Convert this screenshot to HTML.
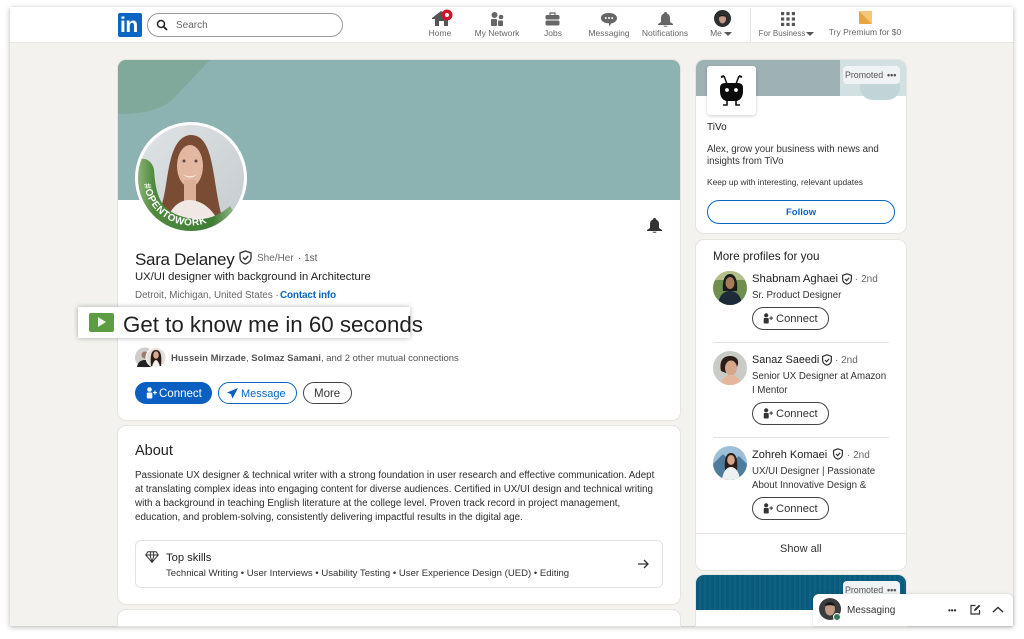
<!DOCTYPE html>
<html><head><meta charset="utf-8"><style>
html,body{margin:0;padding:0;width:1024px;height:639px;overflow:hidden;background:#fff}
*{box-sizing:border-box}
body{font-family:"Liberation Sans",sans-serif;color:#1f1f1f;position:relative}
.t{position:absolute;white-space:nowrap;line-height:1}
.a{position:absolute}
.card{position:absolute;background:#fff;border-radius:8px;box-shadow:0 0 0 1px #e6e4df}
.nl{font-size:8.5px;color:#666;transform:translateX(-50%)}
.g{color:#666}
</style></head><body>
<div class="a" style="left:10px;top:7px;width:1003px;height:619px;background:#f3f2ef;box-shadow:0 1px 5px rgba(0,0,0,.3);overflow:hidden"></div>
<div class="a" style="left:10px;top:7px;width:1003px;height:36px;background:#fff;border-bottom:1px solid #e8e6e1"></div>

<!-- nav -->
<div class="a" style="left:118px;top:13px;width:24px;height:24px;background:#0a66c2;border-radius:2px"></div>
<div class="t" style="left:120px;top:15px;font-size:21px;font-weight:bold;color:#fff;letter-spacing:-.5px">in</div>
<div class="a" style="left:147px;top:13px;width:196px;height:24px;border:1px solid #999;border-radius:12px;background:#fff"></div>
<svg class="a" style="left:156px;top:19px" width="12" height="12" viewBox="0 0 12 12"><circle cx="5" cy="5" r="3.500" fill="none" stroke="#222" stroke-width="1.500"/><path d="M7.500 7.500L11 11" stroke="#222" stroke-width="1.800"/></svg>
<div class="t g" style="left:176px;top:20.500px;font-size:10px">Search</div>

<svg class="a" style="left:431px;top:9px" width="24" height="18" viewBox="0 0 24 18"><path d="M1 9L10 2l3 2V3h3v3l3 3v1h-2v7h-4v-5H8v5H4v-7H1z" fill="#555"/><circle cx="16" cy="6" r="5.500" fill="#c9182b"/><circle cx="16" cy="6" r="2" fill="#fff"/></svg>
<div class="t nl" style="left:440px;top:29px">Home</div>
<svg class="a" style="left:490px;top:12px" width="14" height="15" viewBox="0 0 14 15"><circle cx="4.500" cy="3" r="3" fill="#666"/><circle cx="11" cy="5" r="2.300" fill="#666"/><rect x="1" y="7" width="6" height="7" rx="1" fill="#666"/><rect x="8" y="8.500" width="5" height="5.500" rx="1" fill="#666"/></svg>
<div class="t nl" style="left:497px;top:29px">My Network</div>
<svg class="a" style="left:545px;top:12px" width="15" height="14" viewBox="0 0 15 14"><path d="M5 3V1h5v2" fill="none" stroke="#666" stroke-width="1.200"/><rect x="0.500" y="3" width="14" height="4.500" rx="1.500" fill="#666"/><rect x="0.500" y="8.500" width="14" height="5" rx="1.500" fill="#666"/></svg>
<div class="t nl" style="left:553px;top:29px">Jobs</div>
<svg class="a" style="left:601px;top:13px" width="16" height="14" viewBox="0 0 16 14"><path d="M8 0c4.500 0 8 2 8 5s-2.500 5-5.500 5.300L8 13.500V10.300C3.500 10.300 0 8.500 0 5s3.500-5 8-5z" fill="#666"/><circle cx="4.800" cy="5" r="1" fill="#fff"/><circle cx="8" cy="5" r="1" fill="#fff"/><circle cx="11.200" cy="5" r="1" fill="#fff"/></svg>
<div class="t nl" style="left:609px;top:29px">Messaging</div>
<svg class="a" style="left:658px;top:12px" width="15" height="15" viewBox="0 0 15 15"><path d="M7.500 0a1.500 1.500 0 0 1 1.500 1.500C11 2.300 12 4 12 6v4l3 2v1H0v-1l3-2V6c0-2 1-3.700 3-4.500A1.500 1.500 0 0 1 7.500 0z" fill="#666"/><path d="M5.500 13.800h4a2 1 0 0 1-4 0z" fill="#666"/></svg>
<div class="t nl" style="left:665px;top:29px">Notifications</div>
<svg class="a" style="left:714px;top:10px" width="17" height="17" viewBox="0 0 17 17"><circle cx="8.500" cy="8.500" r="8.500" fill="#2c2e30"/><ellipse cx="8.500" cy="9" rx="3.500" ry="4.500" fill="#c49a84"/><path d="M5 7c0-3 7-3 7 0-2-1-5-1-7 0z" fill="#191919"/></svg>
<div class="t nl" style="left:716px;top:29px">Me</div>
<div class="a" style="left:724px;top:32px;border:4px solid transparent;border-top:4px solid #555;border-bottom:0"></div>
<div class="a" style="left:750px;top:8px;width:1px;height:35px;background:#e8e6e1"></div>
<svg class="a" style="left:781px;top:12px" width="14" height="14" viewBox="0 0 14 14" fill="#555"><rect width="3.200" height="3.200"/><rect x="5.400" width="3.200" height="3.200"/><rect x="10.800" width="3.200" height="3.200"/><rect y="5.400" width="3.200" height="3.200"/><rect x="5.400" y="5.400" width="3.200" height="3.200"/><rect x="10.800" y="5.400" width="3.200" height="3.200"/><rect y="10.800" width="3.200" height="3.200"/><rect x="5.400" y="10.800" width="3.200" height="3.200"/><rect x="10.800" y="10.800" width="3.200" height="3.200"/></svg>
<div class="t nl" style="left:782px;top:29.500px;font-size:8px">For Business</div>
<div class="a" style="left:806px;top:32px;border:4px solid transparent;border-top:4px solid #555;border-bottom:0"></div>
<svg class="a" style="left:859px;top:11px" width="13" height="13" viewBox="0 0 13 13"><rect width="13" height="13" rx="1" fill="#e9a53f"/><path d="M0 0h13v13z" fill="#f4c677"/></svg>
<div class="t nl" style="left:865px;top:28px">Try Premium for $0</div>

<!-- main card -->
<div class="card" style="left:118px;top:60px;width:562px;height:360px;overflow:hidden">
<div class="a" style="left:0;top:0;width:562px;height:140px;background:#8cb3b2"></div>
<svg class="a" style="left:0;top:0" width="100" height="56" viewBox="0 0 100 56"><path d="M0 0H92L56 38C46 48 30 54 0 54z" fill="#80a89b"/></svg>
</div>

<svg class="a" style="left:135px;top:122px" width="112" height="112" viewBox="0 0 112 112">
<defs><clipPath id="c"><circle cx="56" cy="56" r="53"/></clipPath>
<linearGradient id="bg" x1="0" y1="0" x2="1" y2="1"><stop offset="0" stop-color="#e0e4e6"/><stop offset="1" stop-color="#c4cace"/></linearGradient>
<linearGradient id="gr" x1="0" y1="0" x2="1" y2="0"><stop offset="0" stop-color="#9fc088"/><stop offset=".18" stop-color="#4f8a3e"/><stop offset=".7" stop-color="#3f7d34"/><stop offset="1" stop-color="#c9d8bd"/></linearGradient></defs>
<circle cx="56" cy="56" r="56" fill="#fff"/>
<g clip-path="url(#c)"><rect width="112" height="112" fill="url(#bg)"/>
<path d="M27 82C34 60 32 16 55 13c24-1 22 42 31 78l-12 6H36z" fill="#7a4c33"/>
<ellipse cx="55" cy="44" rx="13" ry="21" fill="#e3b8a3"/>
<rect x="49" y="58" width="12" height="22" fill="#dcae98"/>
<circle cx="49" cy="39" r="1.500" fill="#5a4a44"/><circle cx="61" cy="39" r="1.500" fill="#5a4a44"/>
<path d="M48 52q7 5 14 0q-7 7-14 0z" fill="#fff"/>
<path d="M30 112C30 88 44 78 54 78s26 6 34 34z" fill="#f1e7e5"/>
<path d="M4 38C10 34 18 40 19 48 20 62 22 76 30 85 38 93 52 97 64 97 76 97 86 92 95 84L112 112H-2V38z" fill="url(#gr)"/>
</g>
<path id="arc" d="M9 62A47.500 47.500 0 0 0 80 97" fill="none"/>
<text font-family="Liberation Sans" font-weight="bold" font-size="10" fill="#fff" letter-spacing=".5"><textPath href="#arc">#OPENTOWORK</textPath></text>
</svg>

<svg class="a" style="left:647px;top:218px" width="15" height="15" viewBox="0 0 15 15"><path d="M7.500 0a1.500 1.500 0 0 1 1.500 1.500C11 2.300 12 4 12 6v4l3 2v1H0v-1l3-2V6c0-2 1-3.700 3-4.500A1.500 1.500 0 0 1 7.500 0z" fill="#333"/><path d="M5.500 13.800h4a2 1 0 0 1-4 0z" fill="#333"/></svg>

<div class="t" style="left:135px;top:251px;font-size:17px;letter-spacing:-.3px;color:#222">Sara Delaney</div>
<svg class="a" style="left:238px;top:250px" width="15" height="15" viewBox="0 0 15 15"><path d="M7.500 1L13 3v4.500C13 11 10.500 13 7.500 14 4.500 13 2 11 2 7.500V3z" fill="none" stroke="#333" stroke-width="1.300"/><path d="M5 7.500l2 2 3.200-3.500" fill="none" stroke="#333" stroke-width="1.300"/></svg>
<div class="t g" style="left:257px;top:253.500px;font-size:10px">She/Her</div>
<div class="t" style="left:298px;top:253.500px;font-size:10px;color:#555">· 1st</div>
<div class="t" style="left:135px;top:272px;font-size:11.250px;color:#222">UX/UI designer with background in Architecture</div>
<div class="t g" style="left:135px;top:291px;font-size:9.800px">Detroit, Michigan, United States ·</div>
<div class="t" style="left:280px;top:291px;font-size:10px;color:#0a66c2;font-weight:bold;letter-spacing:-.2px">Contact info</div>

<div class="a" style="left:78px;top:307px;width:332px;height:31px;background:#fff;box-shadow:0 0 5px rgba(0,0,0,.3)"></div>
<div class="a" style="left:89px;top:313px;width:25px;height:19px;background:#5d9c45;border-radius:2px"></div>
<div class="a" style="left:98px;top:317px;border-left:8px solid #f1f5ee;border-top:5.500px solid transparent;border-bottom:5.500px solid transparent"></div>
<div class="t" style="left:123px;top:314px;font-size:22.300px;color:#222">Get to know me in 60 seconds</div>

<svg class="a" style="left:135px;top:347px" width="32" height="21" viewBox="0 0 32 21"><circle cx="10" cy="10.500" r="10" fill="#cfcdca"/><path d="M2 20c1-6 5-7 8-7s7 1 8 7z" fill="#222"/><circle cx="10" cy="8" r="3.500" fill="#9c7c68"/><circle cx="21" cy="10.500" r="10" fill="#e6e0dc" stroke="#fff"/><path d="M16 19c-1-10 0-16 5-16s6 6 5 16z" fill="#2a1d18"/><ellipse cx="21" cy="8" rx="2.800" ry="3.800" fill="#d8a890"/><path d="M17 20c1-5 3-7 4-7s3 2 4 7z" fill="#f4f0ee"/></svg>
<div class="t" style="left:171px;top:353.500px;font-size:9.500px;color:#555"><b>Hussein Mirzade</b>, <b>Solmaz Samani</b>, and 2 other mutual connections</div>

<div class="a" style="left:135px;top:382px;width:77px;height:22px;border-radius:11px;background:#0a5fc0"></div>
<svg class="a" style="left:146px;top:387px" width="11" height="12" viewBox="0 0 11 12" fill="#fff"><circle cx="3.500" cy="2.500" r="2.300"/><rect x="0.800" y="5.500" width="5.500" height="6" rx="1"/><rect x="7" y="5" width="4" height="1.100"/><rect x="8.400" y="3.600" width="1.100" height="4"/></svg>
<div class="t" style="left:159px;top:388.500px;font-size:11.500px;color:#fff">Connect</div>
<div class="a" style="left:218px;top:382px;width:79px;height:22px;border-radius:11px;border:1px solid #0a66c2;background:#fff"></div>
<svg class="a" style="left:227px;top:388px" width="11" height="11" viewBox="0 0 11 11"><path d="M11 0L0 4.500 4 6.200 5.500 10.500z" fill="#0a5fc0"/></svg>
<div class="t" style="left:241px;top:388.500px;font-size:11px;color:#0a66c2">Message</div>
<div class="a" style="left:303px;top:382px;width:49px;height:22px;border-radius:11px;border:1px solid #444;background:#fff"></div>
<div class="t" style="left:314px;top:388.500px;font-size:11.500px;color:#333">More</div>

<!-- About -->
<div class="card" style="left:118px;top:426px;width:562px;height:178px"></div>
<div class="t" style="left:135px;top:444px;font-size:14.500px;color:#222">About</div>
<div class="t" style="left:135px;top:471px;font-size:9.800px;color:#2b2b2b">Passionate UX designer &amp; technical writer with a strong foundation in user research and effective communication. Adept</div>
<div class="t" style="left:135px;top:485px;font-size:9.800px;color:#2b2b2b">at translating complex ideas into engaging content for diverse audiences. Certified in UX/UI design and technical writing</div>
<div class="t" style="left:135px;top:499px;font-size:9.800px;color:#2b2b2b">with a background in teaching English literature at the college level. Proven track record in project management,</div>
<div class="t" style="left:135px;top:513px;font-size:9.800px;color:#2b2b2b">education, and problem-solving, consistently delivering impactful results in the digital age.</div>
<div class="a" style="left:135px;top:540px;width:528px;height:48px;border:1px solid #e4e2de;border-radius:6px;background:#fff"></div>
<svg class="a" style="left:145px;top:551px" width="14" height="12" viewBox="0 0 14 12"><path d="M3 .7h8l2.300 3.300L7 11.300.7 4zM.7 4h12.600M5 4l2 7.300L9 4M5 4l1-3.300M9 4L8 .7" fill="none" stroke="#333" stroke-width="1"/></svg>
<div class="t" style="left:166px;top:553px;font-size:11.200px;color:#222">Top skills</div>
<div class="t" style="left:166px;top:568.500px;font-size:9.570px;color:#333">Technical Writing • User Interviews • Usability Testing • User Experience Design (UED) • Editing</div>
<svg class="a" style="left:638px;top:559px" width="11" height="10" viewBox="0 0 11 10"><path d="M0 5h9.500M6 1l4 4-4 4" fill="none" stroke="#333" stroke-width="1.300"/></svg>

<div class="card" style="left:118px;top:610px;width:562px;height:16px;border-radius:8px 8px 0 0"></div>

<!-- Ad card -->
<div class="card" style="left:696px;top:60px;width:210px;height:173px;overflow:hidden">
<div class="a" style="left:0;top:0;width:144px;height:36px;background:#9eb1b3"></div>
<div class="a" style="left:144px;top:0;width:66px;height:36px;background:#d3e0e1"></div>
<div class="a" style="left:164px;top:14px;width:40px;height:26px;border-radius:14px;background:#c1d5d9"></div>
</div>
<div class="a" style="left:707px;top:66px;width:49px;height:49px;background:#fff;border-radius:3px;box-shadow:0 1px 3px rgba(0,0,0,.2)"></div>
<svg class="a" style="left:718px;top:73px" width="27" height="34" viewBox="0 0 27 34"><path d="M9 11L6 3M18 11L21 3" stroke="#111" stroke-width="1.500"/><path d="M6 3L3 4M21 3L24 4" stroke="#111" stroke-width="2"/><path d="M7 10h13q5 0 5 5v3q0 8-6 10H8q-6-2-6-10v-3q0-5 5-5z" fill="#0c0c0c"/><circle cx="9" cy="17" r="1.900" fill="#fff"/><circle cx="18" cy="17" r="1.900" fill="#fff"/><path d="M9 28v4H5M18 28v4h4" fill="none" stroke="#111" stroke-width="1.600"/></svg>
<div class="a" style="left:843px;top:66px;width:57px;height:18px;background:#f0f3f3;border-radius:4px"></div>
<div class="t" style="left:845px;top:70.500px;font-size:8.800px;color:#555">Promoted</div>
<div class="t" style="left:887px;top:71px;font-size:9px;color:#555;font-weight:bold">•••</div>
<div class="t" style="left:707px;top:123px;font-size:10px;color:#222">TiVo</div>
<div class="t" style="left:707px;top:145px;font-size:9.700px;color:#333">Alex, grow your business with news and</div>
<div class="t" style="left:707px;top:156.500px;font-size:9.700px;color:#333">insights from TiVo</div>
<div class="t" style="left:707px;top:178px;font-size:8.400px;color:#333">Keep up with interesting, relevant updates</div>
<div class="a" style="left:707px;top:200px;width:188px;height:24px;border-radius:12px;border:1px solid #0a66c2;background:#fff"></div>
<div class="t" style="left:786px;top:208px;font-size:9.500px;color:#0a66c2;font-weight:bold">Follow</div>

<!-- profiles -->
<div class="card" style="left:696px;top:240px;width:210px;height:330px"></div>
<div class="t" style="left:713px;top:251px;font-size:11.700px;color:#222">More profiles for you</div>

<svg class="a" style="left:713px;top:271px" width="34" height="34" viewBox="0 0 34 34"><defs><clipPath id="p"><circle cx="17" cy="17" r="17"/></clipPath></defs><g clip-path="url(#p)"><rect width="34" height="34" fill="#6e8f4e"/><path d="M0 0h34v9H0z" fill="#b4c08c"/><path d="M10 20c-1-11 2-17 7-17s8 6 7 17z" fill="#1a1a1a"/><ellipse cx="17" cy="12" rx="4.500" ry="6" fill="#a97a5a"/><path d="M5 34c1-10 6-14 12-14s11 4 12 14z" fill="#1d2a38"/></g></svg>
<div class="t" style="left:752px;top:274px;font-size:11.300px;color:#222">Shabnam Aghaei</div>
<svg class="a" style="left:841px;top:273px" width="12" height="12" viewBox="0 0 15 15"><path d="M7.500 1L13 3v4.500C13 11 10.500 13 7.500 14 4.500 13 2 11 2 7.500V3z" fill="none" stroke="#333" stroke-width="1.500"/><path d="M5 7.500l2 2 3.200-3.500" fill="none" stroke="#333" stroke-width="1.500"/></svg>
<div class="t g" style="left:855px;top:275px;font-size:10px">· 2nd</div>
<div class="t" style="left:752px;top:290.500px;font-size:9.700px;color:#333">Sr. Product Designer</div>
<div class="a" style="left:752px;top:307px;width:77px;height:23px;border-radius:12px;border:1px solid #444;background:#fff"></div>
<svg class="a" style="left:763px;top:313px" width="10" height="11" viewBox="0 0 11 12" fill="#333"><circle cx="3.500" cy="2.500" r="2.300"/><rect x="0.800" y="5.500" width="5.500" height="6" rx="1"/><rect x="7" y="5" width="4" height="1.100"/><rect x="8.400" y="3.600" width="1.100" height="4"/></svg>
<div class="t" style="left:776px;top:314px;font-size:11.200px;color:#333">Connect</div>
<div class="a" style="left:713px;top:342px;width:176px;height:1px;background:#e6e4e0"></div>

<svg class="a" style="left:713px;top:351px" width="34" height="34" viewBox="0 0 34 34"><defs><clipPath id="q"><circle cx="17" cy="17" r="17"/></clipPath></defs><g clip-path="url(#q)"><rect width="34" height="34" fill="#c9cbc6"/><path d="M8 20c-2-10 2-15 9-15s10 5 7 11c-2-3-3-5-5-5s-4 2-5 5l-1 6z" fill="#2b1e18"/><ellipse cx="18" cy="17" rx="6" ry="7.500" fill="#d7a78c"/><path d="M8 34c1-7 5-10 10-10s9 3 10 10z" fill="#e5b69a"/></g></svg>
<div class="t" style="left:752px;top:355px;font-size:10.800px;color:#222">Sanaz Saeedi</div>
<svg class="a" style="left:821px;top:354px" width="12" height="12" viewBox="0 0 15 15"><path d="M7.500 1L13 3v4.500C13 11 10.500 13 7.500 14 4.500 13 2 11 2 7.500V3z" fill="none" stroke="#333" stroke-width="1.500"/><path d="M5 7.500l2 2 3.200-3.500" fill="none" stroke="#333" stroke-width="1.500"/></svg>
<div class="t g" style="left:835px;top:355.500px;font-size:10px">· 2nd</div>
<div class="t" style="left:752px;top:371.500px;font-size:9.700px;color:#333">Senior UX Designer at Amazon</div>
<div class="t" style="left:752px;top:385.500px;font-size:9.700px;color:#333">I Mentor</div>
<div class="a" style="left:752px;top:402px;width:77px;height:23px;border-radius:12px;border:1px solid #444;background:#fff"></div>
<svg class="a" style="left:763px;top:408px" width="10" height="11" viewBox="0 0 11 12" fill="#333"><circle cx="3.500" cy="2.500" r="2.300"/><rect x="0.800" y="5.500" width="5.500" height="6" rx="1"/><rect x="7" y="5" width="4" height="1.100"/><rect x="8.400" y="3.600" width="1.100" height="4"/></svg>
<div class="t" style="left:776px;top:408.500px;font-size:11.200px;color:#333">Connect</div>
<div class="a" style="left:713px;top:437px;width:176px;height:1px;background:#e6e4e0"></div>

<svg class="a" style="left:713px;top:446px" width="34" height="34" viewBox="0 0 34 34"><defs><clipPath id="r"><circle cx="17" cy="17" r="17"/></clipPath></defs><g clip-path="url(#r)"><rect width="34" height="34" fill="#9dc0d8"/><path d="M0 18L10 8l8 8 8-6 8 8v16H0z" fill="#4d7c9c"/><path d="M12 24c-1-11 1-17 6-17s7 6 6 17z" fill="#2a1c18"/><ellipse cx="18" cy="14" rx="3.800" ry="5" fill="#d3a68d"/><path d="M9 34c1-9 5-13 9-13s8 4 9 13z" fill="#eef1f4"/></g></svg>
<div class="t" style="left:752px;top:450px;font-size:11px;color:#222">Zohreh Komaei</div>
<svg class="a" style="left:832px;top:448px" width="12" height="12" viewBox="0 0 15 15"><path d="M7.500 1L13 3v4.500C13 11 10.500 13 7.500 14 4.500 13 2 11 2 7.500V3z" fill="none" stroke="#333" stroke-width="1.500"/><path d="M5 7.500l2 2 3.200-3.500" fill="none" stroke="#333" stroke-width="1.500"/></svg>
<div class="t g" style="left:847px;top:450.500px;font-size:10px">· 2nd</div>
<div class="t" style="left:752px;top:466.500px;font-size:9.700px;color:#333">UX/UI Designer | Passionate</div>
<div class="t" style="left:752px;top:480.500px;font-size:9.700px;color:#333">About Innovative Design &amp;</div>
<div class="a" style="left:752px;top:497px;width:77px;height:23px;border-radius:12px;border:1px solid #444;background:#fff"></div>
<svg class="a" style="left:763px;top:503px" width="10" height="11" viewBox="0 0 11 12" fill="#333"><circle cx="3.500" cy="2.500" r="2.300"/><rect x="0.800" y="5.500" width="5.500" height="6" rx="1"/><rect x="7" y="5" width="4" height="1.100"/><rect x="8.400" y="3.600" width="1.100" height="4"/></svg>
<div class="t" style="left:776px;top:503.500px;font-size:11.200px;color:#333">Connect</div>
<div class="a" style="left:696px;top:533px;width:210px;height:1px;background:#e6e4e0"></div>
<div class="t" style="left:780px;top:543.500px;font-size:11px;color:#333">Show all</div>

<!-- second ad -->
<div class="card" style="left:696px;top:575px;width:210px;height:51px;overflow:hidden;border-radius:8px 8px 0 0"><div class="a" style="left:0;top:0;width:210px;height:35px;background:repeating-linear-gradient(90deg,#0a5a7c 0 3px,#0e6282 3px 5px)"></div></div>
<div class="a" style="left:843px;top:581px;width:57px;height:18px;background:#f0f3f3;border-radius:4px"></div>
<div class="t" style="left:845px;top:586px;font-size:8.800px;color:#555">Promoted</div>
<div class="t" style="left:887px;top:585.500px;font-size:9px;color:#555;font-weight:bold">•••</div>

<!-- messaging -->
<div class="a" style="left:813px;top:594px;width:200px;height:32px;background:#fff;border-radius:6px 6px 0 0;box-shadow:0 0 3px rgba(0,0,0,.15)"></div>
<svg class="a" style="left:819px;top:598px" width="24" height="24" viewBox="0 0 24 24"><defs><clipPath id="m"><circle cx="11" cy="11" r="11"/></clipPath></defs><g clip-path="url(#m)"><rect width="22" height="22" fill="#3a3d3e"/><ellipse cx="11" cy="11" rx="5" ry="6.500" fill="#c19a84"/><path d="M6 8c0-5 10-5 10 0-3-1-7-1-10 0z" fill="#161616"/></g><circle cx="18" cy="19" r="3.500" fill="#2f7d57" stroke="#fff" stroke-width="1"/></svg>
<div class="t" style="left:847px;top:605.500px;font-size:10px;color:#333">Messaging</div>
<div class="t" style="left:948px;top:606.500px;font-size:8px;color:#333;font-weight:bold">•••</div>
<svg class="a" style="left:970px;top:604px" width="11" height="11" viewBox="0 0 11 11"><path d="M5.500 1.500H1v8.500h8.500V6" fill="none" stroke="#333" stroke-width="1.200"/><path d="M4 7l.5-2L9 .7l1.300 1.300L6 6.500z" fill="#333"/></svg>
<svg class="a" style="left:992px;top:606px" width="12" height="7" viewBox="0 0 12 7"><path d="M1 6l5-4.500L11 6" fill="none" stroke="#333" stroke-width="1.500"/></svg>
</body></html>
